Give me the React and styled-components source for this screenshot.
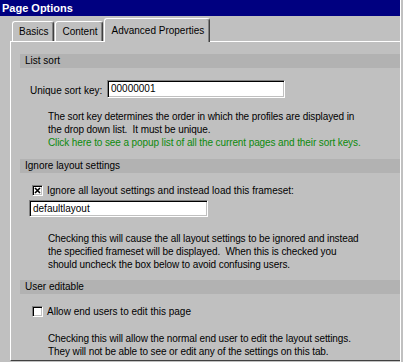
import React from 'react';
import styled, { createGlobalStyle } from 'styled-components';

const GlobalStyle = createGlobalStyle`
  html, body {
    margin: 0;
    padding: 0;
    background: #c0c0c0;
  }
  body {
    font-family: "Liberation Sans", Arial, sans-serif;
    font-size: 10px;
    color: #000;
  }
`;

const Window = styled.div`
  width: 403px;
  height: 362px;
  box-sizing: border-box;
  padding-right: 2px;
  background: #c0c0c0;
  display: flex;
`;

const Frame = styled.div`
  flex: 1;
  display: flex;
  flex-direction: column;
  border-right: 1px solid #fff;
`;

const TitleBar = styled.div`
  height: 16px;
  background: #000080;
  color: #fff;
  font-weight: bold;
  font-size: 11px;
  line-height: 16px;
  padding-left: 2px;
`;

const Body = styled.div`
  flex: 1;
  display: flex;
  flex-direction: column;
  padding: 2px 0 1px 10px;
`;

const TabRow = styled.div`
  display: flex;
  align-items: flex-end;
  height: 23px;
  padding-left: 2px;
  gap: 1px;
  position: relative;
  z-index: 1;
`;

const Tab = styled.div`
  box-sizing: border-box;
  height: ${(p) => (p.$active ? '24px' : '20px')};
  margin-bottom: ${(p) => (p.$active ? '-1px' : '0')};
  padding: ${(p) => (p.$active ? '5px 5px 0 6px' : '3px 5px 0 6px')};
  background: #c0c0c0;
  border-top: 1px solid #fff;
  border-left: 1px solid #fff;
  border-right: 1px solid #404040;
  box-shadow: inset -1px 0 0 #808080;
  border-radius: 3px 3px 0 0;
  font-size: 10px;
  line-height: 14px;
  white-space: nowrap;
`;

const Panel = styled.div`
  flex: 1;
  border-top: 1px solid #fff;
  border-left: 1px solid #fff;
  border-bottom: 1px solid #404040;
  padding: 12px 0 0 9px;
`;

const SectionHeader = styled.div`
  height: 14px;
  line-height: 14px;
  background: #b2b2b2;
  padding-left: 5px;
  margin-top: ${(p) => p.$gap || 0}px;
`;

const FieldRow = styled.div`
  display: flex;
  align-items: flex-end;
  margin-top: 12px;
  padding-left: 10px;
`;

const Label = styled.span`
  width: 77px;
  padding-bottom: 2px;
`;

const TextInput = styled.div`
  box-sizing: border-box;
  width: ${(p) => p.$width}px;
  height: ${(p) => p.$height}px;
  margin-left: ${(p) => p.$indent || 0}px;
  margin-top: ${(p) => p.$gap || 0}px;
  background: #fff;
  border-top: 1px solid #808080;
  border-left: 1px solid #808080;
  border-right: 1px solid #fff;
  border-bottom: 1px solid #fff;
  box-shadow: inset 1px 1px 0 #000, inset -1px -1px 0 #c0c0c0;
  padding: 2px 0 0 3px;
  line-height: 12px;
  font-size: 10px;
`;

const Note = styled.p`
  margin: ${(p) => p.$gap}px 0 0 28px;
  line-height: 13px;
  letter-spacing: -0.1px;
`;

const Link = styled.span`
  display: block;
  color: #0c8a0c;
  cursor: pointer;
`;

const CheckRow = styled.label`
  display: flex;
  align-items: center;
  gap: 4px;
  height: 13px;
  margin-top: 11px;
  padding-left: 12px;
  line-height: 13px;
`;

const Box = styled.span`
  box-sizing: border-box;
  width: 11px;
  height: 11px;
  background: #fff;
  border-top: 1px solid #808080;
  border-left: 1px solid #808080;
  border-right: 1px solid #fff;
  border-bottom: 1px solid #fff;
  box-shadow: inset 1px 1px 0 #000, inset -1px -1px 0 #c0c0c0;
  display: flex;
  align-items: center;
  justify-content: center;
`;

const Check = ({ checked }) => (
  <Box>
    {checked && (
      <svg width="7" height="7" viewBox="0 0 7 7">
        <path d="M1 1 L6 6 M6 1 L1 6" stroke="#000" strokeWidth="1.6" />
      </svg>
    )}
  </Box>
);

export default function App() {
  return (
    <>
      <GlobalStyle />
      <Window>
        <Frame>
          <TitleBar>Page Options</TitleBar>
          <Body>
            <TabRow>
              <Tab>Basics</Tab>
              <Tab>Content</Tab>
              <Tab $active>Advanced Properties</Tab>
            </TabRow>
            <Panel>
              <SectionHeader>List sort</SectionHeader>
              <FieldRow>
                <Label>Unique sort key:</Label>
                <TextInput $width={178} $height={18}>00000001</TextInput>
              </FieldRow>
              <Note $gap={12}>
                The sort key determines the order in which the profiles are displayed in
                <br />
                the drop down list.&nbsp; It must be unique.
                <Link>Click here to see a popup list of all the current pages and their sort keys.</Link>
              </Note>

              <SectionHeader $gap={10}>Ignore layout settings</SectionHeader>
              <CheckRow>
                <Check checked />
                Ignore all layout settings and instead load this frameset:
              </CheckRow>
              <TextInput $width={179} $height={17} $indent={9} $gap={3}>
                defaultlayout
              </TextInput>
              <Note $gap={15}>
                Checking this will cause the all layout settings to be ignored and instead
                <br />
                the specified frameset will be displayed.&nbsp; When this is checked you
                <br />
                should uncheck the box below to avoid confusing users.
              </Note>

              <SectionHeader $gap={9}>User editable</SectionHeader>
              <CheckRow>
                <Check />
                Allow end users to edit this page
              </CheckRow>
              <Note $gap={14}>
                Checking this will allow the normal end user to edit the layout settings.
                <br />
                They will not be able to see or edit any of the settings on this tab.
              </Note>
            </Panel>
          </Body>
        </Frame>
      </Window>
    </>
  );
}
